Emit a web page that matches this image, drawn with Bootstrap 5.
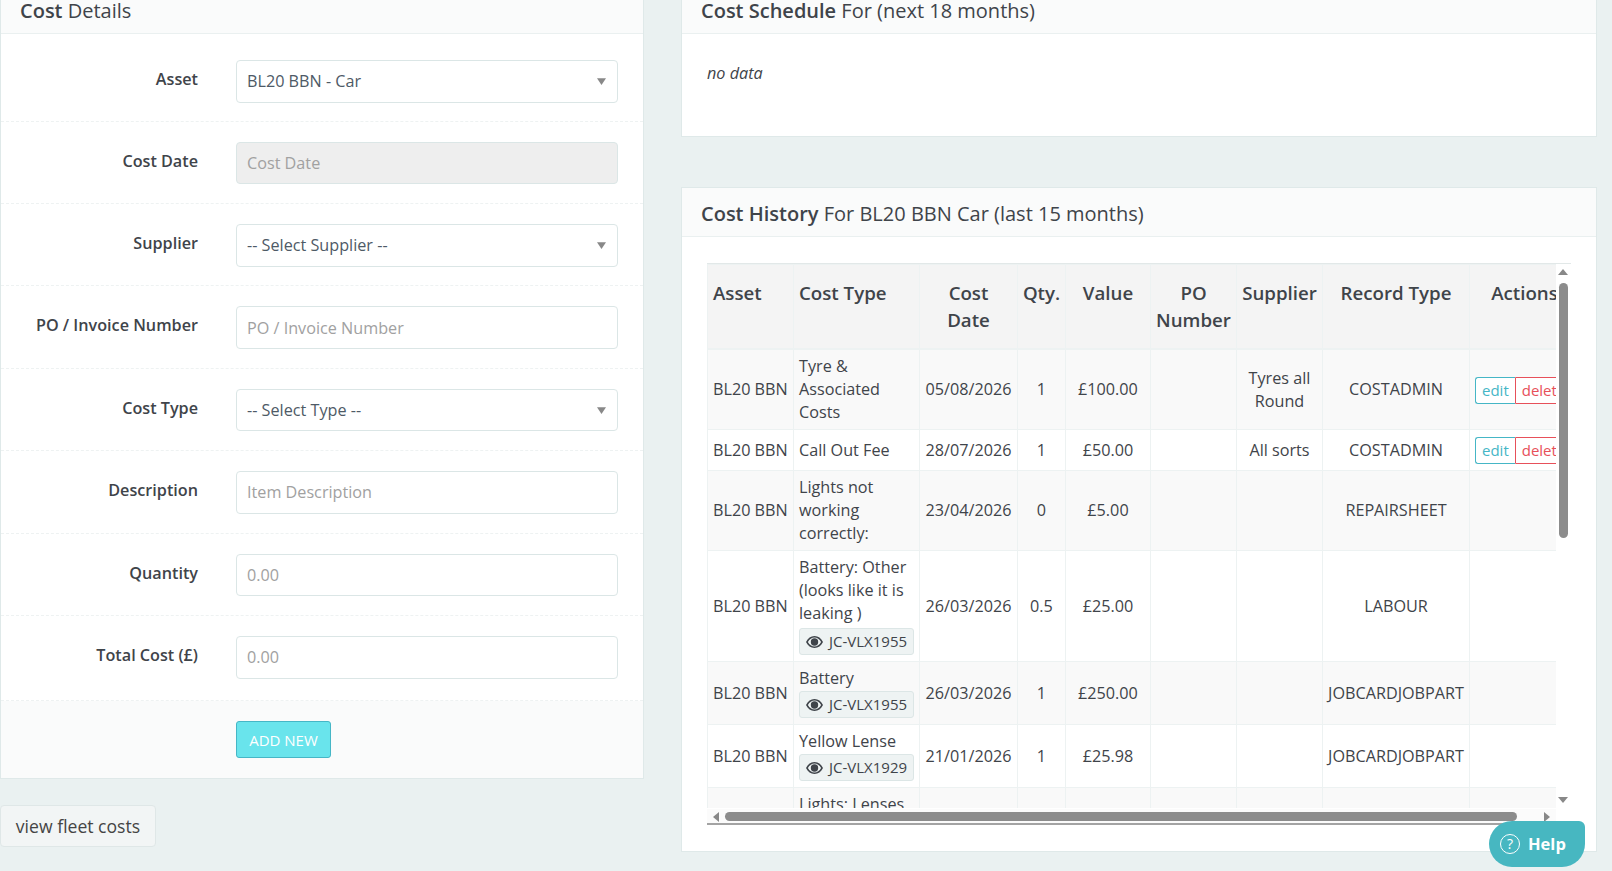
<!DOCTYPE html>
<html lang="en">
<head>
  <meta charset="UTF-8" />
  <meta name="viewport" content="width=device-width, initial-scale=1.0" />
  <title>Cost Details</title>
  <link rel="stylesheet" href="https://cdn.jsdelivr.net/npm/bootstrap@5.3.2/dist/css/bootstrap.min.css" />
  <style>
    body { background: #eaf1f1; font-family: "Open Sans", "Liberation Sans", sans-serif; color: #3f444a; font-size: 16.2px; }
    .cost-page { gap: 37px; padding-right: 15px; }
    .cost-left { width: 644px; flex: none; }
    .cost-right { width: 916px; flex: none; }
    .cost-panel { background: #fff; border: 1px solid #dfe9e9; border-radius: 0; margin-bottom: 0; }
    .cost-panel .card-header { background: #fafbfb; border-bottom: 1px solid #eaf0f0; border-radius: 0; font-size: 20px; line-height: 24px; padding: 14px 19px 10px; color: #3f444a; }
    .cost-panel.cost-cut { border-top: 0; }
    .cost-panel.cost-cut .card-header { padding-top: 0; padding-bottom: 11px; height: 34px; line-height: 22px; }
    .cost-panel .card-header b { font-weight: 600; }
    .cost-form-row { display: flex; align-items: flex-start; padding: 20px 25px 18.73px 0; border-bottom: 1px dashed #eef2f2; }
    .cost-form-row:first-child { padding-top: 26px; padding-bottom: 18px; }
    .cost-form-row:nth-last-child(2) { padding-bottom: 21.7px; }
    .cost-form-row label { width: 197px; flex: none; margin-right: 38px; text-align: right; font-weight: 600; padding-top: 7px; color: #3f444a; }
    .cost-input { height: 42.67px; border: 1px solid #dbe6e6; border-radius: 4px; color: #4e5a66; font-size: 16.2px; padding: 6px 10px; box-shadow: none; }
    .cost-input::placeholder { color: #a1a1a1; }
    .cost-input:disabled { background: #eeeeee; }
    select.cost-input { background-size: 9px 7px; background-position: right 11px center; background-image: url("data:image/svg+xml,%3Csvg xmlns='http://www.w3.org/2000/svg' viewBox='0 0 8 6'%3E%3Cpath fill='%23888' d='M0 0h8L4 6z'/%3E%3C/svg%3E"); }
    .cost-form-foot { background: #fafbfb; padding: 20px 0 20px 235px; }
    .cost-add { background: #69e4ec; border: 1px solid #45b6c6; border-radius: 3px; color: #fff; font-size: 15px; height: 37px; width: 95px; padding: 0; text-transform: uppercase; }
    .cost-fleet { background: #f2f5f5; border: 1px solid #dfe7e7; border-radius: 4px; color: #444; font-size: 17.6px; width: 156px; height: 42px; padding: 0; margin-top: 26px; }
    .cost-nodata { padding: 27px 25px 51px; font-style: italic; margin: 0; line-height: 24px; }
    .cost-gap { margin-top: 50px; }
    .cost-history-body { padding: 26px 25px 26px; }
    .cost-table-wrap { position: relative; height: 562px; width: 864px; border-top: 1px solid #e2e8e8; border-bottom: 2px solid #a3a3a3; padding: 0 15px 15px 0; }
    .cost-table-view { overflow: hidden; height: 100%; }
    .cost-table { table-layout: fixed; width: 872px; margin: 0; border-color: #edf2f2; color: #3f444a; --bs-table-striped-bg: #f9f9f9; --bs-table-striped-color: #3f444a; --bs-table-color: #3f444a; }
    .cost-table th { background: #f4f4f4; font-size: 18.7px; font-weight: 600; line-height: 27px; padding: 14px 5px 15px; text-align: center; vertical-align: top; border-bottom: 2px solid #edf2f2; }
    .cost-table td { font-size: 16.2px; line-height: 23px; padding: 5px; text-align: center; vertical-align: middle; }
    .cost-table th.cost-l, .cost-table td.cost-l { text-align: left; }
    .cost-table th.cost-tight { padding-left: 0; padding-right: 0; white-space: nowrap; }
    .cost-chip { display: flex; align-items: center; gap: 6px; height: 27px; width: 115px; margin: 1px 0; padding-left: 6px; background: #eef3f3; border: 1px solid #dce6e6; border-radius: 3px; font-size: 15px; white-space: nowrap; }
    #costRows tr:nth-child(4) .cost-chip { margin-top: 3px; }
    .cost-table td.cost-actions { white-space: nowrap; text-align: left; padding: 7px 5px 6px; font-size: 0; line-height: 0; }
    .cost-btn { display: inline-block; height: 27px; line-height: 25px; padding: 0 6px; background: #fff; font-size: 15px; border: 1px solid; }
    .cost-btn-edit { color: #45b6c6; border-color: #45b6c6; border-radius: 3px 0 0 3px; border-right: 0; }
    .cost-btn-del { color: #e7505a; border-color: #e7505a; border-radius: 0 3px 3px 0; }
    .cost-sb-v { position: absolute; top: 0; right: 0; bottom: 0; width: 15px; background: #fff; }
    .cost-sb-h { position: absolute; left: 0; bottom: 0; height: 14px; width: 849px; background: #fbfbfb; }
    .cost-thumb-v { position: absolute; left: 3px; top: 19px; width: 9px; height: 255px; background: #8c8c8c; border-radius: 5px; }
    .cost-thumb-h { position: absolute; left: 18px; top: 3px; width: 792px; height: 9px; background: #8c8c8c; border-radius: 5px; }
    .cost-arrow { position: absolute; width: 0; height: 0; border: 5px solid transparent; }
    .cost-up { left: 2px; top: 5px; border-bottom: 6px solid #888; border-top: 0; }
    .cost-down { left: 2px; top: 533px; border-top: 6px solid #888; border-bottom: 0; }
    .cost-left-a { left: 6px; top: 3px; border-right: 6px solid #888; border-left: 0; }
    .cost-right-a { left: 837px; top: 3px; border-left: 6px solid #888; border-right: 0; }
    .cost-help { position: fixed; left: 1489px; top: 821px; width: 96px; height: 46px; background: #47b7c1; color: #fff; border-radius: 23px 6px 23px 23px; font-size: 16.5px; font-weight: 700; gap: 8px; padding-left: 11px; }
    .cost-help-q { width: 20px; height: 20px; border: 1.5px solid #fff; border-radius: 50%; font-size: 14px; font-weight: 400; line-height: 17px; text-align: center; }
  </style>
</head>
<body>
  <div class="d-flex align-items-start cost-page">
    <!-- Cost form -->
    <div class="cost-left">
      <div class="card cost-panel cost-cut">
        <div class="card-header"><b>Cost</b> Details</div>
        <form>
          <div class="cost-form-row">
            <label for="asset">Asset</label>
            <select id="asset" class="form-select cost-input"><option>BL20 BBN - Car</option></select>
          </div>
          <div class="cost-form-row">
            <label for="costDate">Cost Date</label>
            <input id="costDate" class="form-control cost-input" placeholder="Cost Date" disabled />
          </div>
          <div class="cost-form-row">
            <label for="supplier">Supplier</label>
            <select id="supplier" class="form-select cost-input"><option>-- Select Supplier --</option></select>
          </div>
          <div class="cost-form-row">
            <label for="po">PO / Invoice Number</label>
            <input id="po" class="form-control cost-input" placeholder="PO / Invoice Number" />
          </div>
          <div class="cost-form-row">
            <label for="costType">Cost Type</label>
            <select id="costType" class="form-select cost-input"><option>-- Select Type --</option></select>
          </div>
          <div class="cost-form-row">
            <label for="description">Description</label>
            <input id="description" class="form-control cost-input" placeholder="Item Description" />
          </div>
          <div class="cost-form-row">
            <label for="quantity">Quantity</label>
            <input id="quantity" class="form-control cost-input" placeholder="0.00" />
          </div>
          <div class="cost-form-row">
            <label for="total">Total Cost (£)</label>
            <input id="total" class="form-control cost-input" placeholder="0.00" />
          </div>
          <div class="cost-form-foot">
            <button type="button" class="btn cost-add">Add New</button>
          </div>
        </form>
      </div>
      <button type="button" class="btn cost-fleet">view fleet costs</button>
    </div>

    <!-- Schedule and history -->
    <div class="cost-right">
      <div class="card cost-panel cost-cut">
        <div class="card-header"><b>Cost Schedule</b> For (next 18 months)</div>
        <p class="cost-nodata">no data</p>
      </div>
      <div class="card cost-panel cost-gap">
        <div class="card-header"><b>Cost History</b> For BL20 BBN Car (last 15 months)</div>
        <div class="cost-history-body">
          <div class="cost-table-wrap">
            <div class="cost-table-view">
              <table class="table table-bordered table-striped cost-table">
                <colgroup>
                  <col style="width:86px"><col style="width:126px"><col style="width:98px"><col style="width:48px"><col style="width:85px"><col style="width:86px"><col style="width:86px"><col style="width:147px"><col style="width:110px">
                </colgroup>
                <thead>
                  <tr>
                    <th class="cost-l">Asset</th><th class="cost-l">Cost Type</th><th>Cost<br>Date</th><th class="cost-tight">Qty.</th><th>Value</th><th>PO Number</th><th>Supplier</th><th>Record Type</th><th>Actions</th>
                  </tr>
                </thead>
                <tbody id="costRows"></tbody>
              </table>
            </div>
            <div class="cost-sb-v">
              <span class="cost-arrow cost-up"></span>
              <div class="cost-thumb-v"></div>
              <span class="cost-arrow cost-down"></span>
            </div>
            <div class="cost-sb-h">
              <span class="cost-arrow cost-left-a"></span>
              <div class="cost-thumb-h"></div>
              <span class="cost-arrow cost-right-a"></span>
            </div>
          </div>
        </div>
      </div>
    </div>
  </div>

  <div class="cost-help d-flex align-items-center">
    <span class="cost-help-q">?</span>
    <span>Help</span>
  </div>

  <script>
    // History rows
    const rows = [
      { type: 'Tyre &amp; Associated Costs', date: '05/08/2026', qty: '1', value: '£100.00', supplier: 'Tyres all Round', record: 'COSTADMIN', actions: true },
      { type: 'Call Out Fee', date: '28/07/2026', qty: '1', value: '£50.00', supplier: 'All sorts', record: 'COSTADMIN', actions: true },
      { type: 'Lights not working correctly:', date: '23/04/2026', qty: '0', value: '£5.00', supplier: '', record: 'REPAIRSHEET' },
      { type: 'Battery: Other (looks like it is leaking )', chip: 'JC-VLX1955', date: '26/03/2026', qty: '0.5', value: '£25.00', supplier: '', record: 'LABOUR' },
      { type: 'Battery', chip: 'JC-VLX1955', date: '26/03/2026', qty: '1', value: '£250.00', supplier: '', record: 'JOBCARDJOBPART' },
      { type: 'Yellow Lense', chip: 'JC-VLX1929', date: '21/01/2026', qty: '1', value: '£25.98', supplier: '', record: 'JOBCARDJOBPART' },
    ];
    const eye = '<svg width="17" height="12" viewBox="0 0 17 12"><path fill="#3f444a" fill-rule="evenodd" d="M8.5 0C4.800 0 1.800 2.300 0 6c1.800 3.700 4.800 6 8.500 6s6.700-2.300 8.500-6C15.200 2.300 12.200 0 8.500 0zM8.500 1.500c2.700 0 5 1.700 6.600 4.500-1.600 2.800-3.900 4.500-6.600 4.500S3.500 8.800 1.900 6C3.500 3.200 5.800 1.500 8.500 1.500zM8.500 2.300a3.700 3.700 0 1 0 0 7.400 3.700 3.700 0 0 0 0-7.400z"/></svg>';
    const tbody = document.getElementById('costRows');
    rows.forEach((r) => {
      const row = document.createElement('tr');
      const chip = r.chip ? `<div class="cost-chip">${eye}<span>${r.chip}</span></div>` : '';
      const actions = r.actions ? '<span class="cost-btn cost-btn-edit">edit</span><span class="cost-btn cost-btn-del">delete</span>' : '';
      row.innerHTML = `
        <td class="cost-l">BL20 BBN</td>
        <td class="cost-l">${r.type}${chip}</td>
        <td>${r.date}</td>
        <td>${r.qty}</td>
        <td>${r.value}</td>
        <td></td>
        <td>${r.supplier}</td>
        <td>${r.record}</td>
        <td class="cost-actions">${actions}</td>
      `;
      tbody.appendChild(row);
    });
    // Last row sits under the scrollbar, only its first line shows
    const last = document.createElement('tr');
    last.innerHTML = '<td class="cost-l"></td><td class="cost-l">Lights: Lenses<br><br><br></td><td></td><td></td><td></td><td></td><td></td><td></td><td></td>';
    tbody.appendChild(last);
  </script>
  <script src="https://cdn.jsdelivr.net/npm/bootstrap@5.3.2/dist/js/bootstrap.bundle.min.js"></script>
</body>
</html>
